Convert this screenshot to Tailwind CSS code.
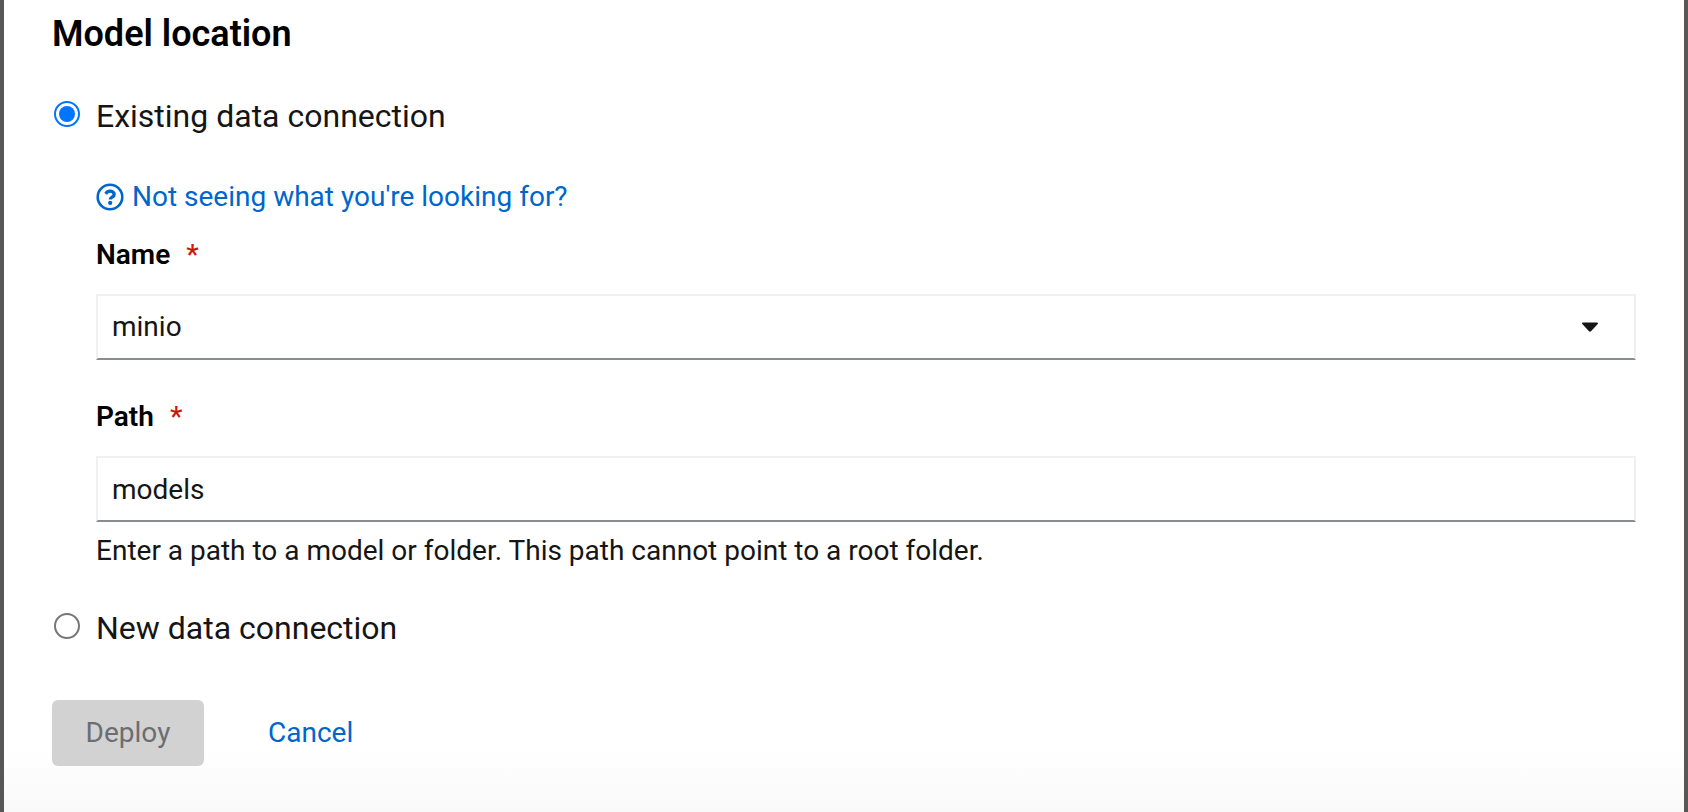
<!DOCTYPE html>
<html lang="en">
<head>
<meta charset="utf-8">
<meta name="viewport" content="width=device-width, initial-scale=1">
<title>Deploy model</title>
<script src="https://cdn.jsdelivr.net/npm/@tailwindcss/browser@4"></script>
</head>
<body class="bg-[#585756] font-['Roboto',sans-serif] text-[28px] leading-[42px] text-[#151515]">
<main class="mx-1 min-h-screen bg-linear-to-b from-white from-92% to-[#f9f9f9] pt-[10px] pr-12 pb-11 pl-12">
  <form>
    <h2 class="text-[36px] leading-[48px] font-semibold text-black">Model location</h2>

    <div class="mt-[34px] flex items-start gap-4">
      <input id="existing" type="radio" name="connection" checked class="mt-[9px] ml-0.5 size-[26px] shrink-0 appearance-none rounded-full border-2 border-[#767676] bg-white bg-clip-content p-[3px] checked:border-[#0075ff] checked:bg-[#0075ff]">
      <label for="existing" class="text-[32px] leading-[48px]">Existing data connection</label>
    </div>

    <div class="mt-9 ml-11">
      <button type="button" class="flex items-center gap-2 text-[#0066cc]">
        <svg class="size-7" viewBox="0 0 28 28" fill="none" aria-hidden="true">
          <circle cx="14" cy="14" r="12.3" stroke="currentColor" stroke-width="2.6"/>
          <path d="M9.700 10.800C10.700 9.100 12 8.200 14 8.200c2.400 0 4.200 1.300 4.200 3.200 0 2.800-3.900 2.700-3.900 5" stroke="currentColor" stroke-width="3.300"/>
          <circle cx="14.200" cy="19.900" r="2.100" fill="currentColor"/>
        </svg>
        Not seeing what you're looking for?
      </button>

      <label for="name" class="mt-4 flex gap-4 font-semibold text-black">Name <span class="font-medium text-[#c9190b]" aria-hidden="true">*</span></label>
      <div class="relative mt-[18px]">
        <select id="name" required class="block h-[66px] w-full appearance-none border-2 border-[#f0f0f0] border-b-[#8a8d90] bg-white px-3.5">
          <option>minio</option>
        </select>
        <svg class="pointer-events-none absolute top-7 right-[38px] h-2.5 w-4" viewBox="0 0 16 10" fill="#151515" aria-hidden="true">
          <path d="M1 .5h14c1 0 1.300 1 .7 1.600L9 9.300c-.6.6-1.400.6-2 0L.3 2.100C-.3 1.500 0 .5 1 .5z"/>
        </svg>
      </div>

      <label for="path" class="mt-9 flex gap-4 font-semibold text-black">Path <span class="font-medium text-[#c9190b]" aria-hidden="true">*</span></label>
      <input id="path" type="text" value="models" required aria-describedby="path-help" class="mt-[18px] block h-[66px] w-full border-2 border-[#f0f0f0] border-b-[#8a8d90] bg-white px-3.5">
      <p id="path-help" class="mt-2">Enter a path to a model or folder. This path cannot point to a root folder.</p>
    </div>

    <div class="mt-8 flex items-start gap-4">
      <input id="new" type="radio" name="connection" class="mt-[9px] ml-0.5 size-[26px] shrink-0 appearance-none rounded-full border-2 border-[#767676] bg-white bg-clip-content p-[3px] checked:border-[#0075ff] checked:bg-[#0075ff]">
      <label for="new" class="text-[32px] leading-[48px]">New data connection</label>
    </div>

    <div class="mt-12 flex gap-8">
      <button type="submit" disabled class="h-[66px] min-w-[152px] rounded-md bg-[#d2d2d2] px-8 text-[#6a6e73]">Deploy</button>
      <button type="button" class="h-[66px] px-8 text-[#0066cc]">Cancel</button>
    </div>
  </form>
</main>
</body>
</html>
